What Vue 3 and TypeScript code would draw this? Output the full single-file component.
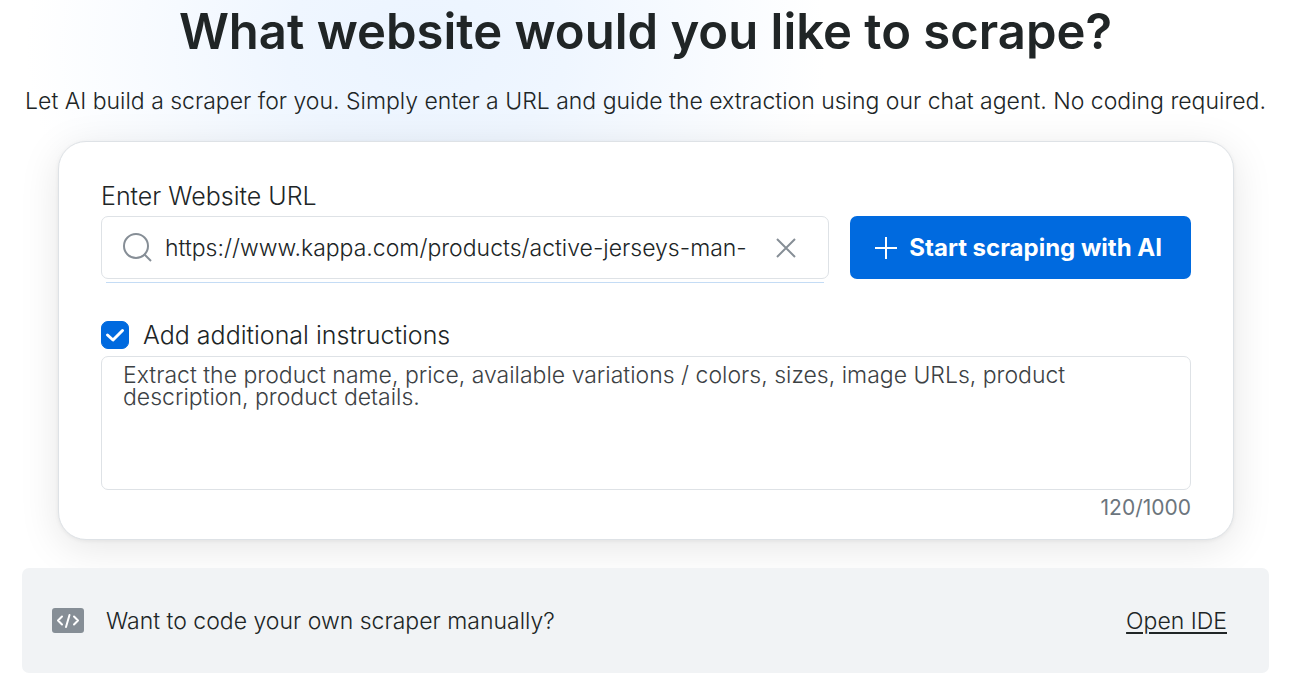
<script setup lang="ts">
import { computed, ref } from 'vue'

const url = ref('https://www.kappa.com/products/active-jerseys-man-')
const withInstructions = ref(true)
const instructions = ref(
  'Extract the product name, price, available variations / colors, sizes, image URLs, product description, product details.',
)
const limit = 1000
const counter = computed(() => `${instructions.value.length}/${limit}`)
</script>

<template>
  <main class="page">
    <h1 class="title">What website would you like to scrape?</h1>
    <p class="lead">
      Let AI build a scraper for you. Simply enter a URL and guide the extraction using our chat agent. No coding required.
    </p>

    <form class="card" @submit.prevent>
      <label class="label" for="url">Enter Website URL</label>
      <div class="row">
        <div class="field">
          <svg class="search" viewBox="0 0 30 30" aria-hidden="true">
            <circle cx="13" cy="13" r="12" />
            <path d="M21 21 28 28" />
          </svg>
          <input id="url" v-model="url" class="url" type="text" spellcheck="false" />
          <button class="clear" type="button" aria-label="Clear" @click="url = ''">
            <svg viewBox="0 0 20 20" aria-hidden="true"><path d="M1 1 19 19M19 1 1 19" /></svg>
          </button>
        </div>
        <button class="start" type="submit">
          <svg viewBox="0 0 22 22" aria-hidden="true"><path d="M11 0V22M0 11H22" /></svg>
          <span>Start scraping with AI</span>
        </button>
      </div>

      <div class="option">
        <span class="check">
          <input id="extra" v-model="withInstructions" type="checkbox" />
          <svg v-if="withInstructions" viewBox="0 0 28 28" aria-hidden="true"><path d="M6.5 14 12 19 21.5 9.5" /></svg>
        </span>
        <label class="label" for="extra">Add additional instructions</label>
      </div>
      <textarea
        v-model="instructions"
        class="instructions"
        aria-label="Additional instructions"
        :maxlength="limit"
        spellcheck="false"
      ></textarea>
      <div class="counter">{{ counter }}</div>
    </form>

    <section class="manual">
      <svg class="code" viewBox="0 0 32 25" aria-hidden="true">
        <rect width="32" height="25" rx="3" />
        <path d="M10 8.5 6 12.5 10 16.5M22 8.5 26 12.5 22 16.5M17.5 7 14 19" />
      </svg>
      <span>Want to code your own scraper manually?</span>
      <a class="ide" href="#">Open IDE</a>
    </section>
  </main>
</template>

<style>
body {
  background: #fff;
}
</style>

<style scoped>
.page {
  box-sizing: border-box;
  padding: 0 22px 10px;
  font-family: Inter, 'Liberation Sans', sans-serif;
  font-weight: 330;
  color: #202526;
  background: radial-gradient(ellipse 400px 300px at 33% 48px, #ebf4ff 0%, #eff6ff 35%, #fff 100%) no-repeat;
}
.title {
  margin: 0;
  font-size: 49px;
  font-weight: 600;
  line-height: 64px;
  text-align: center;
}
.lead {
  margin: 21px 0 23px;
  font-size: 23px;
  line-height: 33px;
  text-align: center;
  white-space: nowrap;
}
.card {
  box-sizing: border-box;
  margin: 0 35px 28px 36px;
  padding: 39px 42px 17px;
  border: 1px solid #dee2e6;
  border-radius: 28px;
  background: #fff;
  box-shadow: 0 8px 40px rgba(0, 0, 0, 0.1), 0 1px 4px rgba(0, 0, 0, 0.06);
}
.label {
  display: block;
  font-size: 25px;
  line-height: 30px;
}
.row {
  display: flex;
  gap: 21px;
  margin-top: 5px;
}
.field {
  position: relative;
  flex: 1;
  min-width: 0;
  box-sizing: border-box;
  height: 63px;
  display: flex;
  align-items: center;
  padding: 0 32px 0 21px;
  border: 1px solid #dee2e6;
  border-radius: 7px;
}
.field::after {
  content: '';
  position: absolute;
  left: 4px;
  right: 4px;
  bottom: -5px;
  height: 1px;
  background: #c4dcf5;
}
svg {
  display: block;
  flex: none;
  fill: none;
}
.search {
  width: 30px;
  height: 30px;
  stroke: #868e96;
  stroke-width: 2;
}
.url {
  flex: 1;
  min-width: 0;
  margin: 0 24px 0 12px;
  padding: 0;
  border: 0;
  outline: 0;
  background: none;
  color: inherit;
  font: 360 23px/32px Inter, 'Liberation Sans', sans-serif;
}
.clear {
  padding: 0;
  border: 0;
  background: none;
}
.clear svg {
  width: 20px;
  height: 20px;
  stroke: #868e96;
  stroke-width: 2;
}
.start {
  flex: none;
  display: flex;
  align-items: center;
  gap: 12px;
  padding: 0 29px 0 25px;
  border: 0;
  border-radius: 7px;
  background: #006adf;
  color: #fff;
  font: 700 24px/32px Inter, 'Liberation Sans', sans-serif;
}
.start svg {
  width: 22px;
  height: 22px;
  stroke: #fff;
  stroke-width: 2;
}
.option {
  display: flex;
  align-items: center;
  gap: 14px;
  margin-top: 41px;
}
.check {
  position: relative;
  width: 28px;
  height: 28px;
}
.check input {
  appearance: none;
  display: block;
  box-sizing: border-box;
  width: 28px;
  height: 28px;
  margin: 0;
  border: 1px solid #006adf;
  border-radius: 7px;
}
.check input:checked {
  background: #006adf;
}
.check svg {
  position: absolute;
  inset: 0;
  stroke: #fff;
  stroke-width: 3;
  stroke-linecap: round;
  stroke-linejoin: round;
  pointer-events: none;
}
.instructions {
  display: block;
  box-sizing: border-box;
  width: 100%;
  height: 134px;
  margin-top: 6px;
  padding: 7px 21px;
  border: 1px solid #dee2e6;
  border-radius: 7px;
  outline: 0;
  resize: none;
  color: #3c4144;
  font: 330 23px/22px Inter, 'Liberation Sans', sans-serif;
}
.counter {
  margin-top: 4px;
  color: #6c757d;
  font-size: 21px;
  font-weight: 400;
  line-height: 28px;
  text-align: right;
}
.manual {
  display: flex;
  align-items: center;
  min-height: 105px;
  box-sizing: border-box;
  padding: 0 42px 0 30px;
  border-radius: 7px;
  background: #f1f3f5;
  font-size: 23px;
  line-height: 32px;
}
.code {
  width: 32px;
  height: 25px;
  margin-right: 22px;
  stroke: #fff;
  stroke-width: 2;
  stroke-linecap: round;
  stroke-linejoin: round;
}
.code rect {
  fill: #868e96;
  stroke: none;
}
.ide {
  margin-left: auto;
  color: inherit;
  text-decoration-thickness: 2px;
  text-underline-offset: 3px;
}
</style>
